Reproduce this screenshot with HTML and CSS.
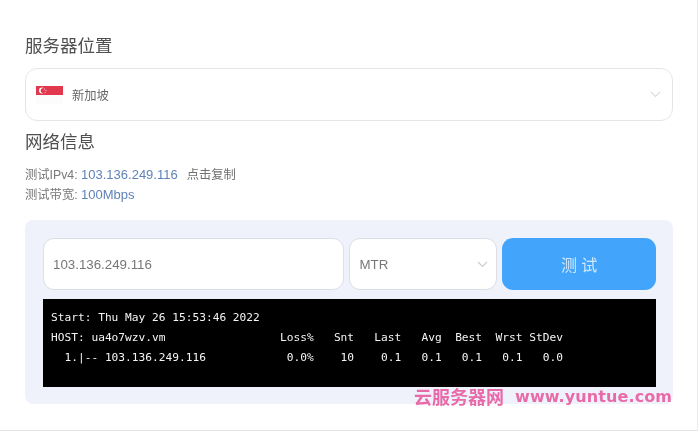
FILE: index.html
```html
<!DOCTYPE html>
<html lang="zh">
<head>
<meta charset="utf-8">
<title>服务器位置</title>
<link rel="stylesheet" href="styles.css">
</head>
<body>
<main class="page">
  <h2 class="title title-first">服务器位置</h2>
  <div class="location">
    <svg class="flag" width="27" height="18" viewBox="0 0 27 18" aria-hidden="true">
      <rect width="27" height="9" fill="#e2384d"/>
      <rect y="9" width="27" height="9" fill="#fcfcfc"/>
      <circle cx="6" cy="4.6" r="3" fill="#fff"/>
      <circle cx="7.4" cy="4.6" r="2.7" fill="#e2384d"/>
      <circle cx="8.6" cy="3" r=".5" fill="#fff"/>
      <circle cx="10" cy="4.4" r=".5" fill="#fff"/>
      <circle cx="9.2" cy="6.2" r=".5" fill="#fff"/>
    </svg>
    <span class="location-name">新加坡</span>
    <svg class="chevron" width="11" height="7" viewBox="0 0 11 7" aria-hidden="true"><path d="M1 1l4.5 4.5L10 1" fill="none" stroke="#d9dce2" stroke-width="1.2"/></svg>
  </div>
  <h2 class="title title-second">网络信息</h2>
  <div class="info">
    <div>测试IPv4: <span class="link">103.136.249.116</span><span class="copy">点击复制</span></div>
    <div>测试带宽: <span class="link">100Mbps</span></div>
  </div>
  <section class="panel">
    <div class="controls">
      <div class="field field-ip">103.136.249.116</div>
      <div class="field field-type">MTR
        <svg class="chevron" width="11" height="7" viewBox="0 0 11 7" aria-hidden="true"><path d="M1 1l4.5 4.5L10 1" fill="none" stroke="#c8ccd4" stroke-width="1.2"/></svg>
      </div>
      <button class="test" type="button">测 试</button>
    </div>
<pre class="terminal">Start: Thu May 26 15:53:46 2022
HOST: ua4o7wzv.vm                 Loss%   Snt   Last   Avg  Best  Wrst StDev
  1.|-- 103.136.249.116            0.0%    10    0.1   0.1   0.1   0.1   0.0</pre>
  </section>
  <div class="watermark"><span class="wm-cn">云服务器网</span><span class="wm-en">www.yuntue.com</span></div>
</main>
</body>
</html>
```
FILE: styles.css
```css
* { box-sizing: border-box; }
html, body { margin: 0; background: #fff; }
body {
  width: 700px;
  height: 433px;
  overflow: hidden;
  font-family: "Liberation Sans", "Noto Sans CJK SC", sans-serif;
}
.page {
  position: relative;
  width: 698px;
  height: 431px;
  padding: 0 25px;
  border-right: 1px solid #ececec;
  border-bottom: 1px solid #e4e4e4;
  filter: blur(0.3px);
}
.title {
  margin: 0;
  font-size: 17.5px;
  line-height: 24px;
  font-weight: 400;
  color: #4f4f4f;
}
.title-first { padding-top: 34px; height: 68px; }
.title-second { margin-top: 9px; }
.location {
  display: flex;
  align-items: center;
  height: 53px;
  width: 648px;
  padding: 0 10px;
  background: #fff;
  border: 1px solid #e3e5e9;
  border-radius: 12px;
}
.flag { flex: none; margin-top: 1px; }
.location-name {
  margin-left: 9px;
  font-size: 12.3px;
  color: #666;
}
.location .chevron { margin-left: auto; margin-right: 1px; }
.info {
  margin-top: 11px;
  font-size: 12.3px;
  line-height: 20px;
  color: #777;
}
.link { color: #5f82b8; font-size: 13px; }
.copy { margin-left: 9px; color: #6f6f6f; }
.panel {
  width: 648px;
  height: 184px;
  margin-top: 15px;
  padding: 18px 17px 0 18px;
  background: #eff2fa;
  border-radius: 8px;
}
.controls {
  display: flex;
  gap: 5px;
  height: 52px;
}
.field {
  display: flex;
  align-items: center;
  background: #fff;
  border: 1px solid #dcdfe8;
  border-radius: 11px;
  font-size: 13.3px;
  color: #777;
}
.field-ip { width: 302px; padding-left: 9px; }
.field-type { width: 148px; padding: 0 8px 0 9px; justify-content: space-between; }
.test {
  width: 154px;
  height: 52px;
  border: 0;
  border-radius: 11px;
  background: #42a5fb;
  color: #cfe7fd;
  font-family: inherit;
  font-size: 16px;
}
.terminal {
  width: 613px;
  height: 88px;
  margin: 9px 0 0;
  padding: 9px 0 0 8px;
  background: #000;
  color: #f4f4f4;
  font-family: "DejaVu Sans Mono", monospace;
  font-size: 11.2px;
  line-height: 19.8px;
}
.watermark {
  position: absolute;
  left: 414px;
  top: 386px;
  display: flex;
  align-items: center;
  height: 20px;
  color: #e96aa9;
  font-weight: 700;
  white-space: nowrap;
}
.wm-cn { font-size: 18px; }
.wm-en {
  margin-left: 11px;
  font-family: "DejaVu Sans", sans-serif;
  font-size: 16px;
  letter-spacing: 0.1px;
  font-weight: 700;
}
```
